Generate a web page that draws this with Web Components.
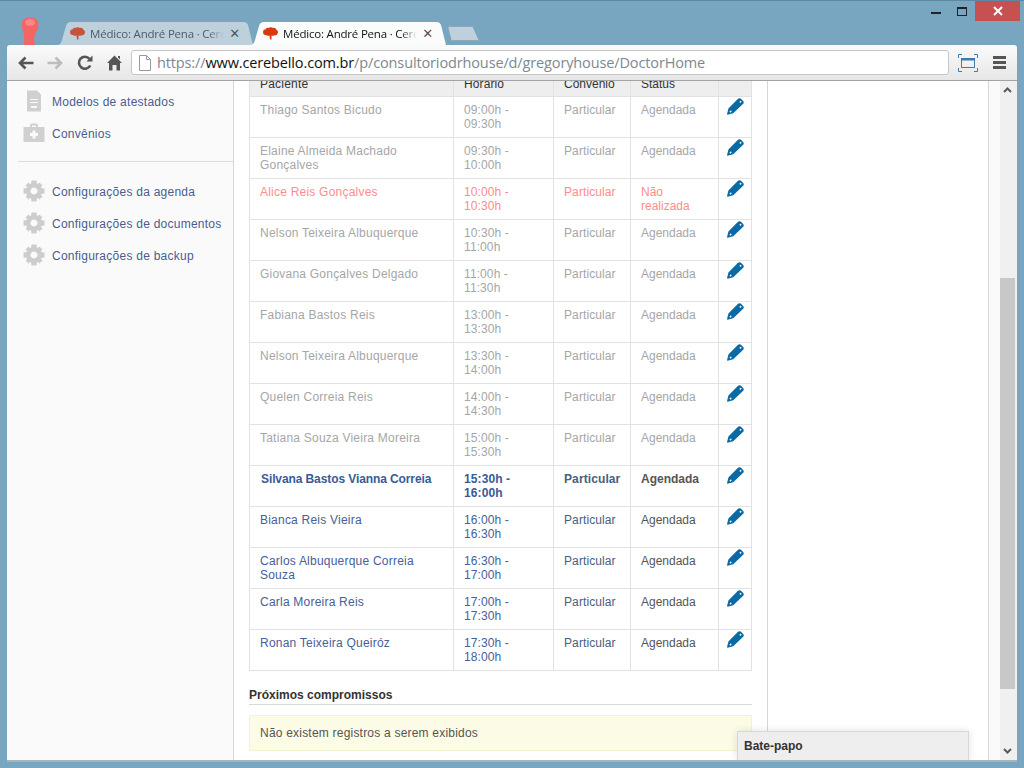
<!DOCTYPE html>
<html lang="pt">
<head>
<meta charset="utf-8">
<title>Médico: André Pena · Cerebello</title>
<style>
  html, body { margin: 0; height: 100%; overflow: hidden; }
  body { font-family: "Liberation Sans", Arial, sans-serif; font-size: 12px; }
</style>
</head>
<body>
<browser-window></browser-window>

<script>
const BRAIN = `<svg width="15" height="13" viewBox="0 0 15 13"><path fill="currentColor" d="M0 5 C0 3 1.500 2.500 2.500 2.500 C3 1 4.500 0.500 5.500 1 C6.500 0 9 0 10 1 C11.500 0.500 13 1.500 13.500 3 C15 3.500 15.500 5.500 14.500 6.500 C14.500 8 13 8.500 12 8 C11 9 9.500 9 8.500 8.500 L8.500 12.500 L7 12.500 L6.500 8.500 C5 9 3.500 8.500 3 8 C1.500 8.500 0 7 0 5 Z"/></svg>`;

const ICONS = {
  back: `<svg width="16" height="14" viewBox="0 0 16 14"><path fill="none" stroke="currentColor" stroke-width="2.600" d="M7.500 1.500 L2 7 L7.500 12.500 M2.500 7 H15.500"/></svg>`,
  reload: `<svg width="16" height="16" viewBox="0 0 16 16"><path fill="none" stroke="currentColor" stroke-width="2.600" d="M13.300 10.500 A6 6 0 1 1 12.500 3.800"/><path fill="currentColor" d="M9.500 6.500 L15.500 6.500 L15.500 0.500 Z"/></svg>`,
  home: `<svg width="15" height="16" viewBox="0 0 15 16"><path fill="currentColor" d="M7.500 0.500 L15 8 L13 8 L13 15.500 L9.500 15.500 L9.500 10 L5.500 10 L5.500 15.500 L2 15.500 L2 8 L0 8 Z M11 1 H13 V4.500 L11 2.500 Z"/></svg>`,
  page: `<svg width="12" height="16" viewBox="0 0 12 16"><path fill="#fff" stroke="#9a9a9a" d="M0.500 0.500 H7.500 L11.500 4.500 V15.500 H0.500 Z"/><path fill="none" stroke="#9a9a9a" d="M7.500 0.500 V4.500 H11.500"/></svg>`,
  resize: `<svg width="20" height="18" viewBox="0 0 20 18"><g fill="none" stroke="#3f7bad"><rect x="3.500" y="4.500" width="13" height="9"/><path stroke-width="2" d="M3 5.500 H17"/><path d="M0.500 4 V0.500 H4 M16 0.500 H19.500 V4 M19.500 14 V17.500 H16 M4 17.500 H0.500 V14"/></g></svg>`,
  pencil: `<svg width="17" height="17" viewBox="0 0 17 17"><path fill="#0b69a3" fill-rule="evenodd" d="M11 0.800 Q12.300 -0.300 13.700 0.500 L16.200 3 Q17.300 4.400 16.200 5.700 L6.200 15.300 L0.500 16.800 L0 16.300 L1.400 10.500 Z M12.900 3.200 a0.800 0.800 0 1 0 1.200 1 a0.800 0.800 0 1 0 -1.200 -1 Z M3 13 a0.800 0.800 0 1 0 1.200 1 a0.800 0.800 0 1 0 -1.200 -1 Z"/></svg>`,
  doc: `<svg width="22" height="22" viewBox="0 0 22 22"><path fill="#d0d0d0" fill-rule="evenodd" d="M4 0.500 H14 L18 4.500 V21.500 H4 Z M7 9 V10 H15 V9 Z M7 12 V13 H15 V12 Z M8 16 V18 H14 V16 Z"/></svg>`,
  kit: `<svg width="22" height="22" viewBox="0 0 22 22"><path fill="#d0d0d0" fill-rule="evenodd" d="M7 5 V3.500 Q7 1.500 9 1.500 H13 Q15 1.500 15 3.500 V5 H21.500 V20 H0.500 V5 Z M9 5 H13 V3.500 H9 Z M9.500 8.500 V11 H7 V14 H9.500 V16.500 H12.500 V14 H15 V11 H12.500 V8.500 Z"/></svg>`,
  gear: `<svg width="22" height="22" viewBox="0 0 22 22"><g fill="#cdcdcd"><path fill-rule="evenodd" d="M11 3 a8 8 0 1 0 0.010 0 Z M11 7.500 a3.500 3.500 0 1 1 -0.010 0 Z"/><path d="M8.500 0.500 H13.500 L14 4.500 H8 Z M8.500 21.500 H13.500 L14 17.500 H8 Z M0.500 8.500 V13.500 L4.500 14 V8 Z M21.500 8.500 V13.500 L17.500 14 V8 Z M2.500 5.500 L5.500 2.500 L8 5 L5 8 Z M19.500 5.500 L16.500 2.500 L14 5 L17 8 Z M2.500 16.500 L5.500 19.500 L8 17 L5 14 Z M19.500 16.500 L16.500 19.500 L14 17 L17 14 Z"/></g></svg>`
};

class BrowserTab extends HTMLElement {
  connectedCallback() {
    const active = this.hasAttribute('active');
    this.attachShadow({ mode: 'open' }).innerHTML = `
      <style>
        :host {
          display: flex;
          align-items: center;
          box-sizing: border-box;
          width: 196px;
          height: 23px;
          margin-right: -3px;
          padding: 0 13px 0 13px;
          gap: 5px;
          position: relative;
          font: 11.500px "Open Sans", sans-serif;
          letter-spacing: -0.200px;
          background: ${active ? '#fafbfb' : '#bfd0dd'};
          color: ${active ? '#111' : '#4d5b66'};
          clip-path: path("M0 23 C3 23 4 21 5 18 L9 4 C10 1 11 0 14 0 H186 C189 0 190 1 191 3 L196 23 Z");
          z-index: ${active ? 1 : 0};
        }
        .icon { display: flex; color: ${active ? '#d9390f' : '#c4553a'}; }
        .title {
          flex: 1;
          white-space: nowrap;
          overflow: hidden;
          -webkit-mask-image: linear-gradient(to right, #000 88%, transparent);
          mask-image: linear-gradient(to right, #000 88%, transparent);
        }
        .close { font: bold 13px "DejaVu Sans", sans-serif; color: #555; line-height: 1; }
      </style>
      <span class="icon">${BRAIN}</span>
      <span class="title"><slot></slot></span>
      <span class="close">✕</span>`;
  }
}

class BrowserToolbar extends HTMLElement {
  connectedCallback() {
    this.attachShadow({ mode: 'open' }).innerHTML = `
      <style>
        :host {
          display: flex;
          align-items: center;
          box-sizing: border-box;
          height: 36px;
          padding: 0 11px 0 4px;
          border-bottom: 1px solid #a3a3a3;
          border-radius: 3px 3px 0 0;
          background: linear-gradient(#fbfbfb, #e6e6e6);
          color: #555;
        }
        .btn { display: flex; justify-content: center; width: 29.500px; }
        .off { color: #bdbdbd; }
        .flip { transform: scaleX(-1); }
        .address {
          flex: 1;
          display: flex;
          align-items: center;
          gap: 6px;
          box-sizing: border-box;
          height: 25px;
          margin-left: 2px;
          padding: 0 7px;
          background: #fff;
          border: 1px solid #c6c6c6;
          border-radius: 3px;
          font: 14.500px "Open Sans", sans-serif;
          letter-spacing: -0.130px;
          color: #7d8890;
          white-space: nowrap;
          overflow: hidden;
        }
        b { font-weight: normal; color: #111; }
        .resize { display: flex; margin-left: 9px; }
        .menu { width: 13px; height: 13px; margin: 0 0 0 15px; border-top: 3px solid #555; border-bottom: 3px solid #555; box-sizing: border-box; position: relative; }
        .menu::after { content: ""; display: block; height: 3px; margin-top: 2px; background: #555; }
      </style>
      <span class="btn">${ICONS.back}</span>
      <span class="btn off"><span class="flip" style="display:flex">${ICONS.back}</span></span>
      <span class="btn">${ICONS.reload}</span>
      <span class="btn">${ICONS.home}</span>
      <div class="address">${ICONS.page}<span>https://<b>www.cerebello.com.br</b>/p/consultoriodrhouse/d/gregoryhouse/DoctorHome</span></div>
      <span class="resize">${ICONS.resize}</span>
      <span class="menu"></span>`;
  }
}

class SideItem extends HTMLElement {
  connectedCallback() {
    this.attachShadow({ mode: 'open' }).innerHTML = `
      <style>
        :host { display: flex; align-items: center; gap: 7px; height: 32px; padding-left: 16px; color: #4a5c92; letter-spacing: 0.250px; }
        span { display: flex; }
        .label { padding-top: 2px; }
      </style>
      <span>${ICONS[this.getAttribute('icon')]}</span>
      <span class="label"><slot></slot></span>`;
  }
}

class SideMenu extends HTMLElement {
  connectedCallback() {
    this.attachShadow({ mode: 'open' }).innerHTML = `
      <style>
        :host { display: block; box-sizing: border-box; width: 227px; flex: none; padding-top: 4px; background: #fafafa; border-right: 1px solid #d6d6d6; }
        hr { margin: 12px 0 13px 11px; border: 0; border-top: 1px solid #dcdcdc; }
      </style>
      <side-item icon="doc">Modelos de atestados</side-item>
      <side-item icon="kit">Convênios</side-item>
      <hr>
      <side-item icon="gear">Configurações da agenda</side-item>
      <side-item icon="gear">Configurações de documentos</side-item>
      <side-item icon="gear">Configurações de backup</side-item>`;
  }
}

// one line of the day's list: past rows are faded, "missed" ones go red
class ScheduleRow extends HTMLElement {
  connectedCallback() {
    const head = this.hasAttribute('head');
    const [name, time, plan, status] = ['name', 'time', 'plan', 'status'].map(a => this.getAttribute(a));
    this.attachShadow({ mode: 'open' }).innerHTML = `
      <style>
        :host {
          display: grid;
          grid-template-columns: 204px 100px 77px 88px 34px;
          height: ${head ? 27 : 41}px;
          box-sizing: border-box;
          border-bottom: 1px solid #e2e2e2;
          line-height: 14px;
          color: #555;
          background: ${head ? '#eeeeee' : '#fff'};
        }
        .link { color: #45609a; }
        .plan { color: #48607e; letter-spacing: 0.100px; }
        .name { letter-spacing: 0.220px; }
        .time { letter-spacing: 0.100px; }
        :host([head]) { color: #333; }
        :host([head]) .link { color: #333; }
        :host([state="past"]) { color: #a6a6a6; }
        :host([state="past"]) .link, :host([state="past"]) .plan { color: #a6a6a6; }
        :host([state="missed"]), :host([state="missed"]) .link, :host([state="missed"]) .plan { color: #ff8c8c; }
        :host([state="now"]) { font-weight: bold; }
        :host([state="now"]) .name { padding-left: 11px; letter-spacing: -0.100px; }
        :host([state="now"]) .link { color: #3a5a96; }
        div { border-left: 1px solid #e2e2e2; padding: ${head ? 7 : 6}px 10px 0; overflow: hidden; }
        .edit { border-right: 1px solid #e2e2e2; padding: 1px 0 0 8px; }
      </style>
      <div class="name link">${name}</div>
      <div class="time link">${time}</div>
      <div class="${head ? '' : 'plan'}">${plan}</div>
      <div>${status}</div>
      <div class="edit">${head ? '' : ICONS.pencil}</div>`;
  }
}

const APPOINTMENTS = [
  ['Thiago Santos Bicudo', '09:00h - 09:30h', 'past'],
  ['Elaine Almeida Machado Gonçalves', '09:30h - 10:00h', 'past'],
  ['Alice Reis Gonçalves', '10:00h - 10:30h', 'missed', 'Não realizada'],
  ['Nelson Teixeira Albuquerque', '10:30h - 11:00h', 'past'],
  ['Giovana Gonçalves Delgado', '11:00h - 11:30h', 'past'],
  ['Fabiana Bastos Reis', '13:00h - 13:30h', 'past'],
  ['Nelson Teixeira Albuquerque', '13:30h - 14:00h', 'past'],
  ['Quelen Correia Reis', '14:00h - 14:30h', 'past'],
  ['Tatiana Souza Vieira Moreira', '15:00h - 15:30h', 'past'],
  ['Silvana Bastos Vianna Correia', '15:30h - 16:00h', 'now'],
  ['Bianca Reis Vieira', '16:00h - 16:30h', ''],
  ['Carlos Albuquerque Correia Souza', '16:30h - 17:00h', ''],
  ['Carla Moreira Reis', '17:00h - 17:30h', ''],
  ['Ronan Teixeira Queiróz', '17:30h - 18:00h', '']
];

class DoctorSchedule extends HTMLElement {
  connectedCallback() {
    const rows = APPOINTMENTS.map(([name, time, state, status]) =>
      `<schedule-row name="${name}" time="${time}" plan="Particular" status="${status || 'Agendada'}" state="${state}"></schedule-row>`).join('');
    this.attachShadow({ mode: 'open' }).innerHTML = `
      <style>
        :host { display: block; box-sizing: border-box; width: 534px; flex: none; padding: 0 15px; margin-top: -11px; background: #fff; border-right: 1px solid #d6d6d6; }
        h4 { margin: 17px 0 10px; padding-bottom: 1px; border-bottom: 1px solid #d9d9d9; font-size: 12px; line-height: 15px; color: #333; }
        .empty { box-sizing: border-box; height: 36px; padding: 10px; line-height: 14px; letter-spacing: 0.210px; color: #555; background: #fbfbe6; border: 1px solid #f3f3d2; }
      </style>
      <schedule-row head name="Paciente" time="Horário" plan="Convênio" status="Status"></schedule-row>
      ${rows}
      <h4>Próximos compromissos</h4>
      <div class="empty">Não existem registros a serem exibidos</div>`;
  }
}

class PageScrollbar extends HTMLElement {
  connectedCallback() {
    this.attachShadow({ mode: 'open' }).innerHTML = `
      <style>
        :host { display: flex; flex-direction: column; align-items: stretch; justify-content: space-between; width: 17px; flex: none; box-sizing: border-box; background: #f0f0f0; position: relative; }
        svg { display: block; margin: 6px auto 6px 3px; }
        .thumb { position: absolute; left: 0; width: 15px; top: 197px; height: 411px; background: #c8c8c8; }
      </style>
      <svg width="9" height="6" viewBox="0 0 9 6"><path fill="none" stroke="#5a5a5a" stroke-width="2" d="M1 5 L4.500 1.500 L8 5"/></svg>
      <div class="thumb"></div>
      <svg width="9" height="6" viewBox="0 0 9 6"><path fill="none" stroke="#5a5a5a" stroke-width="2" d="M1 1 L4.500 4.500 L8 1"/></svg>`;
  }
}

class ChatBar extends HTMLElement {
  connectedCallback() {
    this.attachShadow({ mode: 'open' }).innerHTML = `
      <style>
        :host {
          position: absolute; right: 48px; bottom: 0;
          box-sizing: border-box; width: 232px; height: 29px;
          padding: 0 6px; line-height: 28px;
          font-weight: bold; color: #333;
          background: #eeeeee;
          border: 1px solid #d8d8d8; border-bottom: 0;
          box-shadow: 0 0 8px rgba(0,0,0,.12);
        }
      </style><slot></slot>`;
  }
}

class BrowserWindow extends HTMLElement {
  connectedCallback() {
    this.attachShadow({ mode: 'open' }).innerHTML = `
      <style>
        :host {
          display: flex; flex-direction: column;
          box-sizing: border-box; width: 1024px; height: 768px;
          background: #78a6c0;
          border-top: 1px solid #5f87a0;
          padding-bottom: 6px;
        }
        .strip { display: flex; align-items: flex-end; height: 44px; flex: none; padding-left: 21px; }
        .avatar { display: flex; margin-right: 18px; }
        .newtab { width: 31px; height: 15px; margin: 0 0 4px 5px; background: #bfd0dd; border: 1px solid #8fa9ba; box-sizing: border-box; clip-path: polygon(0 0, 78% 0, 100% 100%, 12% 100%); }
        .controls { display: flex; align-self: flex-start; align-items: flex-start; margin-left: auto; margin-right: 4px; }
        .min { width: 10px; height: 2px; margin: 11px 16px 0 0; background: #222; }
        .max { width: 8px; height: 6px; margin: 6px 8px 0 0; border: 1px solid #222; border-top-width: 2px; }
        .close { display: flex; justify-content: center; align-items: center; width: 45px; height: 20px; background: #c75050; }
        .page { flex: 1; display: flex; flex-direction: column; margin: 0 7px; min-height: 0; }
        .content { flex: 1; display: flex; min-height: 0; position: relative; overflow: hidden; background: #fff; border-bottom: 2px solid #a8b4bb; }
        .right { width: 220px; flex: none; border-right: 1px solid #d6d6d6; }
        .gutter { width: 11px; flex: none; background: #fafafa; }
      </style>
      <div class="strip">
        <span class="avatar"><svg width="18" height="28" viewBox="0 0 18 28"><path fill="#f46565" d="M1 7 C1 2 4 0.500 9 0.500 C14 0.500 17.500 2 17.500 8 C17.500 13 14.500 15.500 13.500 19 C13 23 13.500 26 14 28 H2.500 C3.500 24 3.500 20 2.500 16 C1.500 13 1 11 1 7 Z"/><ellipse cx="9" cy="5.500" rx="5" ry="3.500" fill="#fb8787"/></svg></span>
        <browser-tab>Médico: André Pena · Cere</browser-tab>
        <browser-tab active>Médico: André Pena · Cere</browser-tab>
        <span class="newtab"></span>
        <div class="controls">
          <span class="min"></span><span class="max"></span>
          <span class="close"><svg width="10" height="10" viewBox="0 0 10 10"><path stroke="#fff" stroke-width="2" d="M1 1 L9 9 M9 1 L1 9"/></svg></span>
        </div>
      </div>
      <div class="page">
        <browser-toolbar></browser-toolbar>
        <div class="content">
          <side-menu></side-menu>
          <doctor-schedule></doctor-schedule>
          <div class="right"></div>
          <div class="gutter"></div>
          <page-scrollbar></page-scrollbar>
          <chat-bar>Bate-papo</chat-bar>
        </div>
      </div>`;
  }
}

customElements.define('browser-tab', BrowserTab);
customElements.define('browser-toolbar', BrowserToolbar);
customElements.define('side-item', SideItem);
customElements.define('side-menu', SideMenu);
customElements.define('schedule-row', ScheduleRow);
customElements.define('doctor-schedule', DoctorSchedule);
customElements.define('page-scrollbar', PageScrollbar);
customElements.define('chat-bar', ChatBar);
customElements.define('browser-window', BrowserWindow);
</script>
</body>
</html>
